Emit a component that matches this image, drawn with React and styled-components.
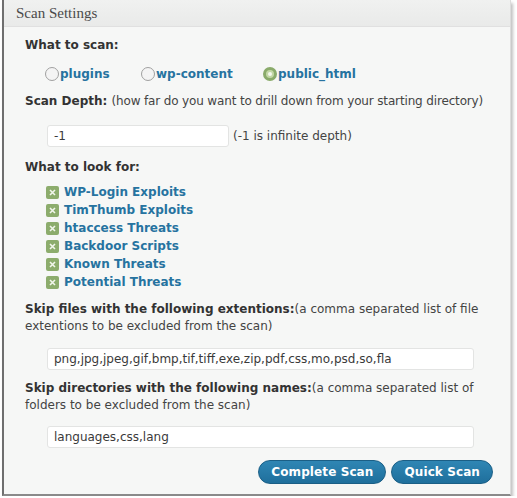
import React from "react";
import styled, { createGlobalStyle } from "styled-components";

const Global = createGlobalStyle`
  html, body {
    margin: 0;
    padding: 0;
    background: #ffffff;
  }
  body {
    font-family: "DejaVu Sans", "Liberation Sans", sans-serif;
  }
`;

const Panel = styled.div`
  width: 506px;
  margin-left: 2px;
  background: #f6f7f6;
  border-left: 2px solid #6f6f6f;
  border-right: 1px solid #dcdcdc;
  border-bottom: 2px solid #8a8a8a;
  box-shadow: 2px 3px 3px rgba(0, 0, 0, 0.25);
`;

const Header = styled.div`
  height: 26px;
  padding-left: 12px;
  display: flex;
  align-items: center;
  background: linear-gradient(#f0f1f0, #e9eae9);
  border-bottom: 1px solid #e0e0e0;
  font-family: "Liberation Serif", "DejaVu Serif", serif;
  font-size: 15px;
  color: #4a4a4a;
`;

const Body = styled.div`
  padding: 10px 0 10px 21px;
`;

const Label = styled.div`
  font-size: 12px;
  font-weight: bold;
  color: #333;
  line-height: 17px;
  margin-top: ${(p) => p.$top || 0}px;
  padding-right: 12px;

  span {
    font-weight: normal;
    color: #444;
    letter-spacing: ${(p) => p.$tight || 0}px;
  }
`;

const RadioRow = styled.div`
  display: flex;
  padding-left: 20px;
  margin-top: 11px;
  height: 18px;
  align-items: center;
`;

const RadioOption = styled.label`
  display: flex;
  align-items: center;
  width: ${(p) => p.$w}px;
  font-size: 12px;
  font-weight: bold;
  color: #2673a0;
`;

const RadioDot = styled.span`
  width: 14px;
  height: 14px;
  border-radius: 50%;
  box-sizing: border-box;
  border: 1px solid #a0a0a0;
  background: #f4f4f4;
  margin-right: 1px;
  display: flex;
  align-items: center;
  justify-content: center;

  ${(p) =>
    p.$on &&
    `
    border: 3px solid #8aab6b;
    background: #c3d8a6;
    &::after {
      content: "";
      width: 4px;
      height: 4px;
      border-radius: 50%;
      background: #f4f8ee;
    }
  `}
`;

const FieldRow = styled.div`
  display: flex;
  align-items: center;
  padding-left: 22px;
  margin-top: ${(p) => p.$top || 8}px;
  font-size: 12px;
  color: #444;
`;

const Input = styled.div`
  box-sizing: border-box;
  width: ${(p) => p.$w}px;
  height: 22px;
  background: #ffffff;
  border: 1px solid #e3e4e3;
  border-radius: 3px;
  padding-left: 6px;
  display: flex;
  align-items: center;
  font-size: 12px;
  color: #3a3a3a;
  margin-right: 4px;
`;

const CheckList = styled.div`
  padding-left: 21px;
  margin-top: 7px;
  display: flex;
  flex-direction: column;
`;

const CheckItem = styled.div`
  display: flex;
  align-items: center;
  height: 18px;
  font-size: 12px;
  font-weight: bold;
  color: #2673a0;
`;

const CheckBox = styled.span`
  width: 13px;
  height: 13px;
  border-radius: 2px;
  background: #8cac6c;
  margin-right: 5px;
  display: flex;
  align-items: center;
  justify-content: center;
`;

const Buttons = styled.div`
  display: flex;
  justify-content: flex-end;
  gap: 5px;
  padding-right: 17px;
  margin-top: 12px;
`;

const Button = styled.button`
  height: 24px;
  padding: 0 12px;
  border-radius: 12px;
  border: 1px solid #1b5f86;
  background: linear-gradient(#2f86b4, #1f6f9c);
  color: #ffffff;
  font-family: "DejaVu Sans", "Liberation Sans", sans-serif;
  font-size: 12px;
  font-weight: bold;
  letter-spacing: 0.1px;
`;

const Cross = () => (
  <svg width="7" height="7" viewBox="0 0 7 7">
    <path d="M1 1L6 6M6 1L1 6" stroke="#f2f6ec" strokeWidth="1.6" />
  </svg>
);

const threats = [
  "WP-Login Exploits",
  "TimThumb Exploits",
  "htaccess Threats",
  "Backdoor Scripts",
  "Known Threats",
  "Potential Threats",
];

export default function App() {
  return (
    <>
      <Global />
      <Panel>
        <Header>Scan Settings</Header>
        <Body>
          <Label>What to scan:</Label>
          <RadioRow>
            <RadioOption $w={96}>
              <RadioDot />
              plugins
            </RadioOption>
            <RadioOption $w={122}>
              <RadioDot />
              wp-content
            </RadioOption>
            <RadioOption $w={110}>
              <RadioDot $on />
              public_html
            </RadioOption>
          </RadioRow>

          <Label $top={10} $tight={-0.15}>
            Scan Depth: <span>(how far do you want to drill down from your starting directory)</span>
          </Label>
          <FieldRow $top={15}>
            <Input $w={182}>-1</Input>
            (-1 is infinite depth)
          </FieldRow>

          <Label $top={12}>What to look for:</Label>
          <CheckList>
            {threats.map((t) => (
              <CheckItem key={t}>
                <CheckBox>
                  <Cross />
                </CheckBox>
                {t}
              </CheckItem>
            ))}
          </CheckList>

          <Label $top={10}>
            Skip files with the following extentions:
            <span>(a comma separated list of file extentions to be excluded from the scan)</span>
          </Label>
          <FieldRow $top={13}>
            <Input $w={427}>png,jpg,jpeg,gif,bmp,tif,tiff,exe,zip,pdf,css,mo,psd,so,fla</Input>
          </FieldRow>

          <Label $top={10}>
            Skip directories with the following names:
            <span>(a comma separated list of folders to be excluded from the scan)</span>
          </Label>
          <FieldRow $top={12}>
            <Input $w={427}>languages,css,lang</Input>
          </FieldRow>

          <Buttons>
            <Button>Complete Scan</Button>
            <Button>Quick Scan</Button>
          </Buttons>
        </Body>
      </Panel>
    </>
  );
}
